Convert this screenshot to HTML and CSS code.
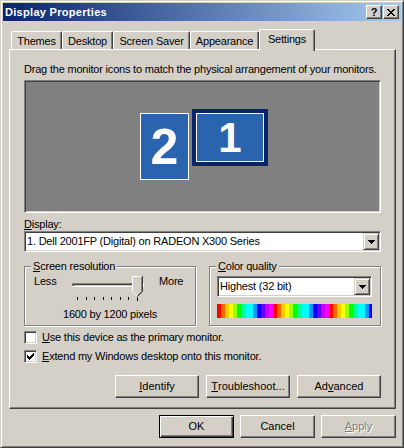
FILE: index.html
```html
<!DOCTYPE html>
<html lang="en">
<head>
    <meta charset="UTF-8">
    <title>Display Properties</title>
    <link rel="stylesheet" href="styles.css">
</head>
<body>
    <div class="window">
        <div class="titlebar">
            <span class="title">Display Properties</span>
            <div class="caption-buttons">
                <span class="cap-btn help">?</span>
                <span class="cap-btn">
                    <svg width="8" height="7" viewBox="0 0 8 7" shape-rendering="crispEdges"><path d="M0 0h2v1H0zM6 0h2v1H6zM1 1h2v1H1zM5 1h2v1H5zM2 2h4v1H2zM3 3h2v1H3zM2 4h4v1H2zM1 5h2v1H1zM5 5h2v1H5zM0 6h2v1H0zM6 6h2v1H6z" fill="#000"/></svg>
                </span>
            </div>
        </div>

        <div class="tabs">
            <span class="tab tab-themes">Themes</span>
            <span class="tab tab-desktop">Desktop</span>
            <span class="tab tab-saver">Screen Saver</span>
            <span class="tab tab-appearance">Appearance</span>
            <span class="tab tab-active">Settings</span>
        </div>

        <div class="panel">
            <p class="hint">Drag the monitor icons to match the physical arrangement of your monitors.</p>

            <!-- monitor arrangement canvas -->
            <div class="monitors">
                <div class="monitor mon2">2</div>
                <div class="monitor mon1">1</div>
            </div>

            <div class="field-label"><u>D</u>isplay:</div>
            <div class="combo">
                <span class="combo-value">1. Dell 2001FP (Digital) on RADEON X300 Series</span>
                <span class="combo-arrow"><svg width="7" height="4" viewBox="0 0 7 4" shape-rendering="crispEdges"><path d="M0 0h7v1H0zM1 1h5v1H1zM2 2h3v1H2zM3 3h1v1H3z" fill="#000"/></svg></span>
            </div>

            <div class="groups">
                <div class="group group-res">
                    <span class="legend"><u>S</u>creen resolution</span>
                    <div class="slider-row">
                        <span class="slider-less">Less</span>
                        <svg class="slider" width="73" height="26" viewBox="0 0 73 26">
                            <g shape-rendering="crispEdges">
                                <rect x="1" y="8" width="71" height="1" fill="#808080"/>
                                <rect x="1" y="8" width="1" height="4" fill="#808080"/>
                                <rect x="2" y="9" width="69" height="1" fill="#404040"/>
                                <rect x="2" y="9" width="1" height="2" fill="#404040"/>
                                <rect x="1" y="11" width="72" height="1" fill="#fff"/>
                                <rect x="72" y="8" width="1" height="4" fill="#fff"/>
                                <path d="M6 22h1v3H6zM15 22h1v3h-1zM23 22h1v3h-1zM32 22h1v3h-1zM40 22h1v3h-1zM49 22h1v3h-1zM57 22h1v3h-1zM66 22h1v4h-1z" fill="#000"/>
                            </g>
                            <polygon points="61,1 72,1 72,17 66.5,22.5 61,17" fill="#d4d0c8"/>
                            <polyline points="61.5,16.5 61.5,1.5 70.5,1.5" stroke="#fff" fill="none"/>
                            <polyline points="61.5,16.5 66.5,21.5" stroke="#fff" fill="none"/>
                            <polyline points="71.5,1 71.5,16.5 66.5,21.5" stroke="#404040" fill="none"/>
                            <polyline points="70.5,2 70.5,16.5 66.5,20.5" stroke="#808080" fill="none"/>
                        </svg>
                        <span class="slider-more">More</span>
                    </div>
                    <div class="res-value">1600 by 1200 pixels</div>
                </div>

                <div class="group group-color">
                    <span class="legend"><u>C</u>olor quality</span>
                    <div class="combo">
                        <span class="combo-value">Highest (32 bit)</span>
                        <span class="combo-arrow"><svg width="7" height="4" viewBox="0 0 7 4" shape-rendering="crispEdges"><path d="M0 0h7v1H0zM1 1h5v1H1zM2 2h3v1H2zM3 3h1v1H3z" fill="#000"/></svg></span>
                    </div>
                    <div class="color-bar"></div>
                </div>
            </div>

            <div class="check-row first">
                <span class="checkbox"></span>
                <span><u>U</u>se this device as the primary monitor.</span>
            </div>
            <div class="check-row">
                <span class="checkbox"><svg width="7" height="7" viewBox="0 0 7 7" shape-rendering="crispEdges"><path d="M6 0h1v1H6zM5 1h2v1H5zM0 2h1v1H0zM4 2h3v1H4zM0 3h2v1H0zM3 3h3v1H3zM0 4h5v1H0zM1 5h3v1H1zM2 6h1v1H2z" fill="#000"/></svg></span>
                <span><u>E</u>xtend my Windows desktop onto this monitor.</span>
            </div>

            <div class="panel-buttons">
                <button class="btn btn-wide"><u>I</u>dentify</button>
                <button class="btn btn-wide"><u>T</u>roubleshoot...</button>
                <button class="btn btn-wide">Ad<u>v</u>anced</button>
            </div>
        </div>

        <div class="dialog-buttons">
            <button class="btn btn-default">OK</button>
            <button class="btn">Cancel</button>
            <button class="btn btn-disabled"><u>A</u>pply</button>
        </div>
    </div>
</body>
</html>
```

FILE: styles.css
```css
body {
    margin: 0;
    font-family: "Liberation Sans", Arial, sans-serif;
    font-size: 11px;
    letter-spacing: -0.2px;
    color: #000;
    background: #d4d0c8;
}
.window {
    width: 404px;
    height: 448px;
    box-sizing: border-box;
    background: #d4d0c8;
    border: 1px solid;
    border-color: #d4d0c8 #404040 #404040 #d4d0c8;
    box-shadow: inset 1px 1px #fff, inset -1px -1px #808080;
    padding: 2px;
}
.titlebar {
    height: 18px;
    display: flex;
    align-items: center;
    justify-content: space-between;
    padding: 0 2px;
    background: linear-gradient(to right, #0a246a, #a6caf0);
}
.title {
    color: #fff;
    font-weight: bold;
    letter-spacing: 0.3px;
}
.caption-buttons {
    display: flex;
    gap: 1px;
}
.cap-btn {
    width: 16px;
    height: 14px;
    box-sizing: border-box;
    display: flex;
    align-items: center;
    justify-content: center;
    background: #d4d0c8;
    border: 1px solid;
    border-color: #fff #404040 #404040 #fff;
    box-shadow: inset -1px -1px #808080;
}
.help {
    font-weight: bold;
    font-size: 11px;
    line-height: 1;
    letter-spacing: 0;
}

/* tab strip */
.tabs {
    display: flex;
    align-items: flex-end;
    height: 20px;
    margin-top: 8px;
    padding-left: 8px;
    position: relative;
    z-index: 1;
}
.tab {
    height: 18px;
    box-sizing: border-box;
    padding-top: 3px;
    line-height: 13px;
    text-align: center;
    background: #d4d0c8;
    border-top: 1px solid #fff;
    border-left: 1px solid #fff;
    border-right: 1px solid #404040;
    border-radius: 2px 2px 0 0;
    box-shadow: inset -1px 0 #808080;
}
.tab-themes { width: 51px; }
.tab-desktop { width: 51px; }
.tab-saver { width: 77px; }
.tab-appearance { width: 69px; }
.tab-active {
    width: 56px;
    height: 22px;
    margin-bottom: -2px;
}

.panel {
    height: 360px;
    box-sizing: border-box;
    margin: 0 5px 0 6px;
    padding: 13px 14px 0 14px;
    border: 1px solid;
    border-color: #fff #404040 #404040 #fff;
    box-shadow: inset -1px -1px #808080;
}
.hint {
    margin: 0;
    line-height: 13px;
}
.monitors {
    position: relative;
    height: 133px;
    margin-top: 4px;
    box-sizing: border-box;
    background: #808080;
    border: 1px solid;
    border-color: #808080 #fff #fff #808080;
    box-shadow: inset 1px 1px #404040, inset -1px -1px #d4d0c8;
}
.monitor {
    position: absolute;
    box-sizing: border-box;
    display: flex;
    align-items: center;
    justify-content: center;
    background: #2a64ae;
    color: #fff;
    font-weight: bold;
    line-height: 1;
    letter-spacing: 0;
}
.mon2 {
    left: 115px;
    top: 32px;
    width: 49px;
    height: 67px;
    border: 1px solid #fff;
    font-size: 50px;
}
.mon1 {
    left: 167px;
    top: 28px;
    width: 76px;
    height: 57px;
    border: 4px solid #0a246a;
    box-shadow: inset 0 0 0 1px #fff;
    font-size: 42px;
}

.field-label {
    margin-top: 5px;
    line-height: 13px;
}
.combo {
    height: 21px;
    box-sizing: border-box;
    display: flex;
    align-items: center;
    padding: 1px;
    background: #fff;
    border: 1px solid;
    border-color: #808080 #fff #fff #808080;
    box-shadow: inset 1px 1px #404040, inset -1px -1px #d4d0c8;
}
.combo-value {
    flex: 1;
    margin-left: 1px;
    line-height: 13px;
    white-space: nowrap;
}
.combo-arrow {
    width: 16px;
    height: 17px;
    box-sizing: border-box;
    display: flex;
    align-items: center;
    justify-content: center;
    background: #d4d0c8;
    border: 1px solid;
    border-color: #d4d0c8 #404040 #404040 #d4d0c8;
    box-shadow: inset 1px 1px #fff, inset -1px -1px #808080;
}

.groups {
    display: flex;
    justify-content: space-between;
    margin-top: 14px;
}
.group {
    position: relative;
    width: 172px;
    height: 60px;
    box-sizing: border-box;
    border: 1px solid #808080;
    box-shadow: inset 1px 1px #fff, 1px 1px #fff;
}
.legend {
    position: absolute;
    top: -7px;
    left: 6px;
    padding: 0 2px;
    line-height: 13px;
    background: #d4d0c8;
}
.group-res {
    padding-top: 8px;
}
.slider-row {
    display: flex;
    align-items: flex-start;
    padding-left: 9px;
    line-height: 13px;
}
.slider-less {
    width: 37px;
}
.slider-more {
    padding-left: 15px;
}
.res-value {
    margin-top: 7px;
    line-height: 13px;
    text-align: center;
}
.group-color {
    padding: 9px 8px 0 7px;
}
.color-bar {
    height: 14px;
    margin-top: 7px;
    background: repeating-linear-gradient(to right,
        #ff0000 0, #ff0000 4px,
        #ff6600 4px, #ff6600 8px,
        #ffcc00 8px, #ffcc00 12px,
        #ffff00 12px, #ffff00 16px,
        #99ff00 16px, #99ff00 20px,
        #00ff00 20px, #00ff00 24px,
        #00ff99 24px, #00ff99 28px,
        #00ffff 28px, #00ffff 36px,
        #0099ff 36px, #0099ff 40px,
        #0000ff 40px, #0000ff 44px,
        #6600ff 44px, #6600ff 48px,
        #cc00ff 48px, #cc00ff 52px,
        #ff00ff 52px, #ff00ff 56px);
}

.check-row {
    display: flex;
    align-items: center;
    gap: 5px;
    height: 13px;
    margin-top: 6px;
    line-height: 13px;
}
.check-row.first {
    margin-top: 5px;
}
.checkbox {
    width: 13px;
    height: 13px;
    box-sizing: border-box;
    display: flex;
    align-items: center;
    justify-content: center;
    background: #fff;
    border: 1px solid;
    border-color: #808080 #fff #fff #808080;
    box-shadow: inset 1px 1px #404040, inset -1px -1px #d4d0c8;
}

.panel-buttons {
    display: flex;
    justify-content: flex-end;
    gap: 7px;
    margin-top: 12px;
}
.dialog-buttons {
    display: flex;
    justify-content: flex-end;
    gap: 6px;
    margin: 6px 5px 0 0;
}
.btn {
    width: 75px;
    height: 23px;
    box-sizing: border-box;
    display: flex;
    align-items: center;
    justify-content: center;
    padding: 0;
    font: inherit;
    line-height: 13px;
    color: #000;
    background: #d4d0c8;
    border: 1px solid;
    border-color: #fff #404040 #404040 #fff;
    box-shadow: inset -1px -1px #808080;
}
.btn-wide {
    width: 84px;
}
.btn-default {
    border: 1px solid #000;
    box-shadow: inset 1px 1px #fff, inset -1px -1px #404040, inset -2px -2px #808080;
}
.btn-disabled {
    color: #808080;
    text-shadow: 1px 1px #fff;
}
```
